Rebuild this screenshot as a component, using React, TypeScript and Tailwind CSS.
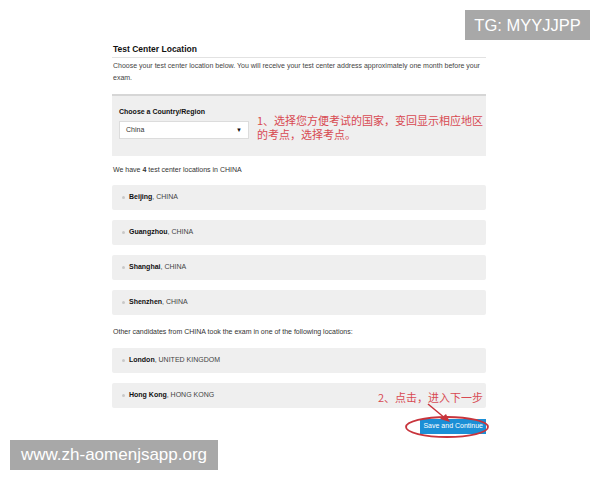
const rowsChina = [
  { city: 'Beijing', country: 'CHINA' },
  { city: 'Guangzhou', country: 'CHINA' },
  { city: 'Shanghai', country: 'CHINA' },
  { city: 'Shenzhen', country: 'CHINA' },
]

const rowsOther = [
  { city: 'London', country: 'UNITED KINGDOM' },
  { city: 'Hong Kong', country: 'HONG KONG' },
]

function LocationRow({ city, country }: { city: string; country: string }) {
  return (
    <div className="flex h-[25px] items-center rounded-[2px] bg-[#efefef] pl-[10px] text-[7px] text-[#444]">
      <span className="mr-[4px] h-[3px] w-[3px] rounded-full bg-[#c8c8c8]" />
      <span className="font-bold text-[#111]">{city}</span>
      <span>, {country}</span>
    </div>
  )
}

export default function App() {
  return (
    <div className="relative h-[480px] w-[600px] overflow-hidden bg-white font-['Liberation_Sans',Arial,sans-serif]">
      <div className="ml-[112px] w-[374px] pt-[44px]">
        <h1 className="pl-[1px] text-[8.5px] leading-[10px] font-bold text-[#111]">Test Center Location</h1>
        <div className="mt-[3px] h-px bg-[#e2e2e2]" />
        <p className="mt-[2px] pl-[1px] text-[7px] leading-[12px] text-[#444]">
          Choose your test center location below. You will receive your test center address approximately one month before your exam.
        </p>

        <div className="mt-[10px] h-[62px] border-t-2 border-[#d6d6d6] bg-[#efefef] pl-[7px] pt-[12px]">
          <div className="text-[7px] leading-[8px] font-bold text-[#111]">Choose a Country/Region</div>
          <div className="mt-[5px] flex h-[18px] w-[130px] items-center justify-between border border-[#dcdcdc] bg-white px-[6px] text-[7px] text-[#333]">
            <span>China</span>
            <span className="text-[6px] text-[#111]">▼</span>
          </div>
        </div>

        <p className="mt-[9px] pl-[1px] text-[7px] leading-[10px] text-[#333]">
          We have <span className="font-bold">4</span> test center locations in CHINA
        </p>

        <div className="mt-[10px] flex flex-col gap-[10px]">
          {rowsChina.map((r) => (
            <LocationRow key={r.city} {...r} />
          ))}
        </div>

        <p className="mt-[12px] pl-[1px] text-[7px] leading-[10px] text-[#333]">
          Other candidates from CHINA took the exam in one of the following locations:
        </p>

        <div className="mt-[11px] flex flex-col gap-[10px]">
          {rowsOther.map((r) => (
            <LocationRow key={r.city} {...r} />
          ))}
        </div>

        <div className="mt-[11px] flex justify-end">
          <button className="h-[15px] bg-[#1b8fd6] px-[3px] text-[7px] text-white">Save and Continue</button>
        </div>
      </div>

      {/* annotations */}
      <div className="absolute left-[257px] top-[113px] font-['Noto_Sans_CJK_SC',sans-serif] text-[11px] leading-[14px] text-[#d84a52]">
        <div>1、选择您方便考试的国家，变回显示相应地区</div>
        <div>的考点，选择考点。</div>
      </div>
      <div className="absolute left-[378px] top-[390px] font-['Noto_Sans_CJK_SC',sans-serif] text-[11px] leading-[14px] text-[#d84a52]">
        2、点击，进入下一步
      </div>
      <svg className="absolute left-0 top-0" width="600" height="480" viewBox="0 0 600 480">
        <ellipse cx="447" cy="427" rx="41" ry="10" fill="none" stroke="#c8343c" strokeWidth="1.8" />
        <path d="M428 404 L446 419" stroke="#c8343c" strokeWidth="1.5" fill="none" />
        <path d="M450 422 L440 419 L446 414 Z" fill="#c8343c" />
      </svg>

      {/* watermarks */}
      <div className="absolute left-[465px] top-[10px] flex h-[30px] w-[125px] items-center justify-center bg-[#a8a8a8] text-[16.5px] text-white">
        TG: MYYJJPP
      </div>
      <div className="absolute left-[10px] top-[440px] flex h-[30px] w-[208px] items-center justify-center bg-[#a8a8a8] text-[17px] text-white">
        www.zh-aomenjsapp.org
      </div>
    </div>
  )
}
